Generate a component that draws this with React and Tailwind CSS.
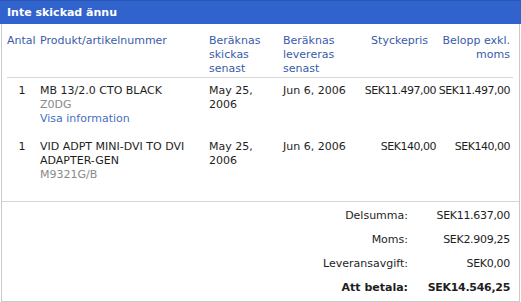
const ITEMS = [
  {
    qty: 1,
    name: 'MB 13/2.0 CTO BLACK',
    part: 'Z0DG',
    link: true,
    ships: 'May 25, 2006',
    delivers: 'Jun 6, 2006',
    unit: 'SEK11.497,00',
    total: 'SEK11.497,00',
  },
  {
    qty: 1,
    name: 'VID ADPT MINI-DVI TO DVI ADAPTER-GEN',
    part: 'M9321G/B',
    link: false,
    ships: 'May 25, 2006',
    delivers: 'Jun 6, 2006',
    unit: 'SEK140,00',
    total: 'SEK140,00',
  },
];

const TOTALS = [
  { label: 'Delsumma:', value: 'SEK11.637,00' },
  { label: 'Moms:', value: 'SEK2.909,25' },
  { label: 'Leveransavgift:', value: 'SEK0,00' },
  { label: 'Att betala:', value: 'SEK14.546,25', bold: true },
];

export default function App() {
  return (
    <div className="w-[521px] h-[302px] bg-white font-['DejaVu_Sans',sans-serif] text-[11px] leading-[14px] text-[#1e1e1e]">
      {/* Section header */}
      <div className="h-[24px] bg-[#3163cd] border-t border-[#2a56b6] px-[7px] flex items-center">
        <span className="text-white font-bold text-[11px]">Inte skickad ännu</span>
      </div>

      <div className="mx-px w-[519px] border-l border-r border-b border-[#cacaca]">
        <table className="table-fixed border-collapse w-[506px] mx-[5px] mb-[11px]">
          <colgroup>
            <col className="w-[30px]" />
            <col className="w-[169px]" />
            <col className="w-[73px]" />
            <col className="w-[74px]" />
            <col className="w-[84px]" />
            <col className="w-[76px]" />
          </colgroup>
          <thead>
            <tr className="border-b border-[#d6d6d6] text-[#3a5ca8] align-top">
              <th className="font-normal text-left pt-[10px] pb-px whitespace-nowrap">Antal</th>
              <th className="font-normal text-left pl-[3px] pt-[10px] pb-px">Produkt/artikelnummer</th>
              <th className="font-normal text-left pl-[3px] pt-[10px] pb-px">Beräknas skickas senast</th>
              <th className="font-normal text-left pl-[4px] pr-[10px] pt-[10px] pb-px">Beräknas levereras senast</th>
              <th className="font-normal text-right pr-[9px] pt-[10px] pb-px">Styckepris</th>
              <th className="font-normal text-right pr-[3px] pt-[10px] pb-px">Belopp exkl. moms</th>
            </tr>
          </thead>
          <tbody>
            {ITEMS.map((item) => (
              <tr key={item.part} className="align-top">
                <td className="text-center pt-[6px] pb-[8px]">{item.qty}</td>
                <td className="pl-[3px] pr-[20px] pt-[6px] pb-[8px]">
                  <div>{item.name}</div>
                  <div className="text-[#8a8a8a]">{item.part}</div>
                  {item.link && <div className="text-[#4a6dc2]">Visa information</div>}
                </td>
                <td className="pl-[3px] pt-[6px] pb-[8px]">{item.ships}</td>
                <td className="pl-[4px] pt-[6px] pb-[8px] whitespace-nowrap">{item.delivers}</td>
                <td className="text-right pr-px pt-[6px] pb-[8px] whitespace-nowrap tracking-[-0.5px]">{item.unit}</td>
                <td className="text-right pr-[3px] pt-[6px] pb-[8px] whitespace-nowrap tracking-[-0.5px]">{item.total}</td>
              </tr>
            ))}
          </tbody>
        </table>

        {/* Totals */}
        <div className="border-t border-[#d6d6d6] pt-[2px] pb-px">
          {TOTALS.map((row) => (
            <div key={row.label} className={`flex justify-end h-[24px] items-center pr-[9px] ${row.bold ? 'font-bold' : ''}`}>
              <span className="text-right">{row.label}</span>
              <span className="w-[102px] text-right tracking-[-0.3px]">{row.value}</span>
            </div>
          ))}
        </div>
      </div>
    </div>
  );
}
